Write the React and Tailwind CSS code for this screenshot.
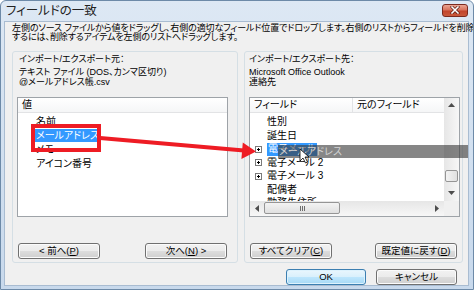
import React from "react";

const Btn = ({ children, w = "w-[82px]", primary = false }) => (
  <div
    className={`${w} h-[16px] rounded-[3px] border flex items-center justify-center text-[9.5px] leading-none text-black ${
      primary
        ? "border-[#3c7fb1] bg-[linear-gradient(#eaf6fd,#d9f0fc_50%,#bee6fd_50%,#a7d9f5)] shadow-[inset_0_0_0_1px_#ddf2fd]"
        : "border-[#707070] bg-[linear-gradient(#f2f2f2,#ebebeb_50%,#dddddd_50%,#cfcfcf)] shadow-[inset_0_0_0_1px_#fbfbfb]"
    }`}
  >
    {children}
  </div>
);

const Plus = () => (
  <div className="w-[7px] h-[7px] border border-[#7a7a7a] bg-white flex items-center justify-center relative">
    <div className="absolute w-[3px] h-[1px] bg-black" />
    <div className="absolute w-[1px] h-[3px] bg-black" />
  </div>
);

const Row = ({ plus, children }) => (
  <div className="h-[13.5px] flex items-center pl-[5px] text-[10px] leading-none whitespace-nowrap">
    <div className="w-[12px]">{plus && <Plus />}</div>
    {children}
  </div>
);

export default function App() {
  return (
    <div className="relative w-[474px] h-[290px] overflow-hidden rounded-t-[6px] border border-[#6d8aa8] bg-[linear-gradient(#dde8f4,#c8d9ec)] flex flex-col font-['Liberation_Sans','Noto_Sans_CJK_JP',sans-serif] [font-feature-settings:'palt'] text-black">
      {/* title bar */}
      <div className="h-[20px] flex items-center pl-[5px] shrink-0">
        <span className="text-[12.5px] leading-none text-[#222]">フィールドの一致</span>
        <div className="ml-auto mr-[5px] mt-[-2px] w-[26px] h-[13px] rounded-[3px] border border-[#7b2a1e] bg-[linear-gradient(#eba592,#d8735c_45%,#c2452c_55%,#c9593b)] flex items-center justify-center">
          <svg width="10" height="8" viewBox="0 0 10 8">
            <path d="M2 1 L8 7 M8 1 L2 7" stroke="#5a1a10" strokeWidth="3" strokeLinecap="square" />
            <path d="M2 1 L8 7 M8 1 L2 7" stroke="#fff" strokeWidth="1.6" strokeLinecap="square" />
          </svg>
        </div>
      </div>

      {/* client */}
      <div className="flex-1 ml-[3px] mr-[4px] mb-[3px] bg-[#f0f0f0] border border-[#a9bcd1] flex flex-col pl-[7px] pr-[4px]">
        <div className="pt-[1.5px] text-[9px] leading-[9px] whitespace-nowrap tracking-[-0.1px]">
          <div>左側のソース ファイルから値をドラッグし、右側の適切なフィールド位置でドロップします。右側のリストからフィールドを削除</div>
          <div>するには、削除するアイテムを左側のリストへドラッグします。</div>
        </div>

        <div className="mt-[9px] flex gap-[6px] h-[212px]">
          {/* left group */}
          <div className="w-[226px] h-full rounded-[3px] border border-[#d5dfe5] flex flex-col pl-[4px]">
            <div className="pl-[2px] pt-[2px] text-[9px] leading-[10px] whitespace-nowrap">
              <div>インポート/エクスポート元：</div>
              <div className="mt-[3px]">テキスト ファイル (DOS、カンマ区切り)</div>
              <div>@メールアドレス帳.csv</div>
            </div>
            <div className="mt-[10px] w-[211px] h-[120px] border border-[#9ea3a8] bg-white flex flex-col">
              <div className="h-[15px] border-b border-[#e2e3e5] bg-[linear-gradient(#ffffff,#f5f6f7)] flex items-center pl-[4px] text-[10px] leading-none">値</div>
              <div className="mt-[2px] flex flex-col text-[10px] leading-none">
                <div className="h-[14px] flex items-center pl-[18px]">名前</div>
                <div className="h-[14px] flex items-center pl-[17px]">
                  <span className="bg-[#3399ff] text-white px-[1px] h-[13px] flex items-center">メールアドレス</span>
                </div>
                <div className="h-[14px] flex items-center pl-[18px]">メモ</div>
                <div className="h-[14px] flex items-center pl-[18px]">アイコン番号</div>
              </div>
            </div>
            <div className="mt-[26px] ml-[1px] w-[209px] flex justify-between">
              <Btn>&lt; 前へ(<span className="underline">P</span>)</Btn>
              <Btn>次へ(<span className="underline">N</span>) &gt;</Btn>
            </div>
          </div>

          {/* right group */}
          <div className="w-[219px] h-full rounded-[3px] border border-[#d5dfe5] flex flex-col pl-[4px]">
            <div className="pt-[2px] text-[9px] leading-[10px] whitespace-nowrap">
              <div>インポート/エクスポート先：</div>
              <div className="mt-[3px]">Microsoft Office Outlook</div>
              <div>連絡先</div>
            </div>
            <div className="mt-[10px] w-[211px] h-[120px] border border-[#9ea3a8] bg-white grid grid-cols-[1fr_15px] grid-rows-[1fr_15px]">
              <div className="overflow-hidden flex flex-col">
                <div className="h-[15px] shrink-0 border-b border-[#e2e3e5] bg-[linear-gradient(#ffffff,#f5f6f7)] flex text-[10px] leading-none">
                  <div className="w-[103px] border-r border-[#e2e3e5] flex items-center pl-[4px]">フィールド</div>
                  <div className="flex items-center pl-[4px] whitespace-nowrap">元のフィールド</div>
                </div>
                <div className="mt-[3px] flex flex-col">
                  <Row>性別</Row>
                  <Row>誕生日</Row>
                  <Row plus>
                    <span className="bg-[#3399ff] text-white px-[1px] h-[13px] flex items-center">電子メール</span>
                  </Row>
                  <Row plus>電子メール 2</Row>
                  <Row plus>電子メール 3</Row>
                  <Row>配偶者</Row>
                  <Row>勤務先住所</Row>
                </div>
              </div>
              {/* vertical scrollbar */}
              <div className="bg-[linear-gradient(90deg,#e6e6e6,#f7f7f7)] flex flex-col items-center">
                <div className="h-[15px] flex items-center justify-center">
                  <svg width="7" height="4" viewBox="0 0 7 4"><path d="M0 4 L3.5 0 L7 4 Z" fill="#4d4d4d" /></svg>
                </div>
                <div className="flex-1 w-full relative">
                  <div className="absolute left-[1px] right-[1px] top-[57px] h-[12px] rounded-[2px] border border-[#959595] bg-[linear-gradient(90deg,#f3f3f3,#e0e0e0)]" />
                </div>
                <div className="h-[15px] flex items-center justify-center">
                  <svg width="7" height="4" viewBox="0 0 7 4"><path d="M0 0 L3.5 4 L7 0 Z" fill="#4d4d4d" /></svg>
                </div>
              </div>
              {/* horizontal scrollbar */}
              <div className="bg-[linear-gradient(#e6e6e6,#f7f7f7)] flex items-center">
                <div className="w-[14px] flex items-center justify-center">
                  <svg width="4" height="7" viewBox="0 0 4 7"><path d="M4 0 L0 3.5 L4 7 Z" fill="#4d4d4d" /></svg>
                </div>
                <div className="w-[76px] h-[12px] rounded-[2px] border border-[#959595] bg-[linear-gradient(#f3f3f3,#e0e0e0)] flex items-center justify-center gap-[1px]">
                  <div className="w-[1px] h-[5px] bg-[#6d6d6d]" />
                  <div className="w-[1px] h-[5px] bg-[#6d6d6d]" />
                  <div className="w-[1px] h-[5px] bg-[#6d6d6d]" />
                </div>
                <div className="flex-1" />
                <div className="w-[14px] flex items-center justify-center">
                  <svg width="4" height="7" viewBox="0 0 4 7"><path d="M0 0 L4 3.5 L0 7 Z" fill="#4d4d4d" /></svg>
                </div>
              </div>
              <div className="bg-[#f0f0f0]" />
            </div>
            <div className="mt-[26px] ml-[1px] w-[207px] flex justify-between">
              <Btn>すべてクリア(<span className="underline">C</span>)</Btn>
              <Btn>既定値に戻す(<span className="underline">D</span>)</Btn>
            </div>
          </div>
        </div>

        <div className="mt-[6px] flex justify-end gap-[10px] pr-[7px]">
          <Btn w="w-[80px]" primary>OK</Btn>
          <Btn w="w-[81px]">キャンセル</Btn>
        </div>
      </div>

      {/* overlays: red highlight box, red arrow, drag ghost, cursor */}
      <div className="absolute left-[30px] top-[123px] w-[70px] h-[28px] border-[4px] border-[#ee1c24]" />
      <div className="absolute left-[277px] top-[144px] w-[190px] h-[13px] bg-[rgba(60,60,60,0.62)] flex items-center pl-[1px] text-[10px] leading-none text-[#d4d4d4] whitespace-nowrap">
        メールアドレス
      </div>
      <svg className="absolute left-0 top-0 pointer-events-none" width="474" height="290" viewBox="0 0 474 290">
        <line x1="99" y1="137" x2="243" y2="149.4" stroke="#ee1c24" strokeWidth="4" />
        <polygon points="255,150.5 240.4,158 241.8,141.5" fill="#ee1c24" />
        <path d="M299 148 L299 160 L302 157 L304.5 162 L306.5 161 L304 156 L308 156 Z" fill="#fff" stroke="#000" strokeWidth="0.8" strokeLinejoin="round" />
      </svg>
    </div>
  );
}
